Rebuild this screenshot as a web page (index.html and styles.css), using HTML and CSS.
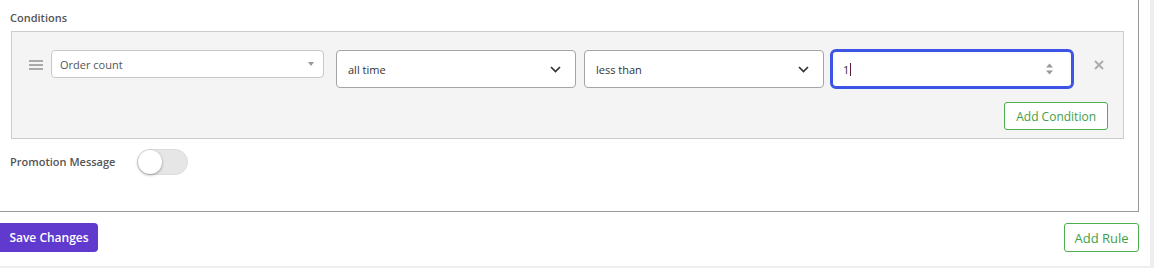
FILE: index.html
```html
<!DOCTYPE html>
<html lang="en">
<head>
  <meta charset="UTF-8" />
  <title>Rule Editor</title>
  <link rel="stylesheet" href="styles.css">
</head>
<body>
  <div class="page">
    <div class="rule-card">
      <div class="section-label">Conditions</div>

      <div class="conditions">
        <div class="condition-row">
          <span class="handle">
            <svg width="14" height="10" viewBox="0 0 14 10"><path d="M0 1h14M0 5h14M0 9h14" stroke="#aaa" stroke-width="2"/></svg>
          </span>
          <div class="field field-small w-type">
            <span>Order count</span>
            <span class="caret"></span>
          </div>
          <div class="field w-mid gap-a">
            <span>all time</span>
            <svg class="chevron" width="11" height="7" viewBox="0 0 11 7"><path d="M1 1l4.5 4.5 4.5-4.5" fill="none" stroke="#333" stroke-width="1.7"/></svg>
          </div>
          <div class="field w-mid gap-b">
            <span>less than</span>
            <svg class="chevron" width="11" height="7" viewBox="0 0 11 7"><path d="M1 1l4.5 4.5 4.5-4.5" fill="none" stroke="#333" stroke-width="1.7"/></svg>
          </div>
          <div class="field field-focus w-input gap-c">
            <span>1<span class="cursor"></span></span>
            <svg class="spin" width="9" height="12" viewBox="0 0 9 12"><path d="M4.5 0.5L8 4.5H1zM4.5 11.5L8 7.5H1z" fill="#999"/></svg>
          </div>
          <span class="remove">
            <svg width="10" height="10" viewBox="0 0 10 10"><path d="M1 1l8 8M9 1l-8 8" stroke="#aaa" stroke-width="1.8"/></svg>
          </span>
        </div>
        <div class="condition-actions">
          <button class="btn-outline">Add Condition</button>
        </div>
      </div>

      <div class="promo-row">
        <span class="section-label">Promotion Message</span>
        <span class="toggle"><span class="knob"></span></span>
      </div>
    </div>

    <div class="footer">
      <button class="btn-primary">Save Changes</button>
      <button class="btn-outline btn-big">Add Rule</button>
    </div>
  </div>
</body>
</html>
```

FILE: styles.css
```css
html, body {
  margin: 0;
  padding: 0;
}
body {
  font-family: "Open Sans", Arial, sans-serif;
  background-color: #eeeeee;
  width: 1154px;
  height: 268px;
  overflow: hidden;
}
.page {
  width: 1150px;
  height: 266px;
  background-color: #fff;
}
.rule-card {
  width: 1128px;
  height: 201px;
  padding: 10px 0 0 10px;
  border-right: 1px solid #999;
  border-bottom: 1px solid #999;
}
.section-label {
  font-size: 11px;
  font-weight: 600;
  color: #555;
  line-height: 16px;
}
.conditions {
  margin: 5px 14px 0 1px;
  height: 106px;
  background-color: #f4f4f4;
  border: 1px solid #ccc;
}
.condition-row {
  display: flex;
  align-items: flex-start;
  padding: 18px 0 0 17px;
}
.handle {
  width: 22px;
  padding-top: 10px;
  display: flex;
}
.field {
  box-sizing: border-box;
  height: 38px;
  display: flex;
  align-items: center;
  justify-content: space-between;
  background-color: #fff;
  border: 1px solid #a5a5a5;
  border-radius: 4px;
  padding: 0 11px 0 11px;
  font-size: 11px;
  color: #333;
}
.field-small {
  height: 28px;
  border-color: #c8c8c8;
  color: #555;
  padding: 0 8px 0 8px;
}
.caret {
  width: 0;
  height: 0;
  border-left: 3px solid transparent;
  border-right: 3px solid transparent;
  border-top: 4px solid #999;
  margin-right: 1px;
}
.chevron {
  margin-right: 3px;
}
.field-focus {
  height: 40px;
  margin-top: -1px;
  border: 3px solid #3d55e6;
  border-radius: 6px;
  padding: 0 17px 0 10px;
  color: #3a2a2a;
}
.cursor {
  display: inline-block;
  width: 1px;
  height: 13px;
  margin-left: 1px;
  vertical-align: -2px;
  background-color: #5a1a3a;
}
.w-type { width: 273px; }
.w-mid { width: 240px; }
.w-input { width: 244px; }
.gap-a { margin-left: 12px; }
.gap-b { margin-left: 8px; }
.gap-c { margin-left: 6px; }
.remove {
  display: flex;
  margin: 10px 0 0 20px;
}
.condition-actions {
  display: flex;
  justify-content: flex-end;
  padding: 13px 15px 0 0;
}
.btn-outline {
  font-family: "Open Sans", Arial, sans-serif;
  font-size: 12px;
  color: #43a047;
  background-color: #fff;
  border: 1px solid #4caf50;
  border-radius: 3px;
  height: 28px;
  padding: 0 11px;
  cursor: pointer;
}
.promo-row {
  display: flex;
  align-items: center;
  margin-top: 10px;
}
.toggle {
  position: relative;
  display: inline-block;
  margin-left: 22px;
  width: 51px;
  height: 26px;
  border-radius: 13px;
  background-color: #e6e6e6;
  border: 1px solid #dcdcdc;
  box-sizing: border-box;
}
.knob {
  position: absolute;
  left: 0;
  top: 0;
  width: 24px;
  height: 24px;
  border-radius: 50%;
  background-color: #fff;
  box-shadow: 0 1px 3px rgba(0, 0, 0, 0.35);
}
.footer {
  display: flex;
  justify-content: space-between;
  width: 1139px;
  padding-top: 11px;
}
.btn-primary {
  font-family: "Open Sans", Arial, sans-serif;
  font-size: 12px;
  font-weight: 600;
  color: #fff;
  background-color: #6039cf;
  border: none;
  border-radius: 0 4px 4px 0;
  height: 29px;
  width: 98px;
  padding: 0;
  cursor: pointer;
}
.btn-big {
  font-size: 13px;
  height: 29px;
  width: 75px;
  padding: 0;
}
```
